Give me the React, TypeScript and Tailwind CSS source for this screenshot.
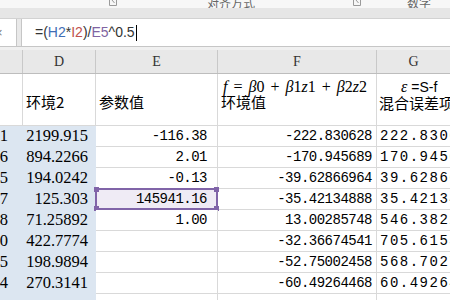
import React from 'react';

type Row = { c: string; d: string; e: string; f: string; g: string; active?: boolean };

const rows: Row[] = [
  { c: '1', d: '2199.915', e: '-116.38', f: '-222.830628', g: '222.830628' },
  { c: '6', d: '894.2266', e: '2.01', f: '-170.945689', g: '170.945689' },
  { c: '5', d: '194.0242', e: '-0.13', f: '-39.62866964', g: '39.62866964' },
  { c: '7', d: '125.303', e: '145941.16', f: '-35.42134888', g: '35.42134888', active: true },
  { c: '8', d: '71.25892', e: '1.00', f: '13.00285748', g: '546.3822394' },
  { c: '0', d: '422.7774', e: '', f: '-32.36674541', g: '705.6153221' },
  { c: '5', d: '198.9894', e: '', f: '-52.75002458', g: '568.7027365' },
  { c: '4', d: '270.3141', e: '', f: '-60.49264468', g: '60.49264468' },
  { c: '', d: '', e: '', f: '', g: '' },
];

const serif = "font-['Liberation_Serif','Times_New_Roman',serif]";
const mono = "font-['Liberation_Mono',monospace] text-[14px] tracking-[-0.5px]";
const cjk = "font-['Noto_Sans_CJK_SC','Noto_Sans',sans-serif] text-[15px]";

const Launcher = () => (
  <svg width="8" height="6" viewBox="0 0 8 6" className="text-[#9a9a9a]">
    <path d="M0.5 0 V5.5 H7.5 V0" fill="none" stroke="currentColor" strokeWidth="1" />
    <path d="M3 0 L5.5 3" stroke="currentColor" strokeWidth="1" />
  </svg>
);

export default function App() {
  return (
    <div className="w-[450px] h-[300px] overflow-hidden bg-[#f0f0f0] text-black">
      {/* ribbon bottom, labels cut off */}
      <div className="h-[8px] bg-[#f7f7f7] overflow-hidden flex items-end text-[12px] text-[#666] font-['Noto_Sans_CJK_SC',sans-serif] leading-none">
        <div className="w-[109px]" />
        <div className="mb-[2px]"><Launcher /></div>
        <div className="w-[90px]" />
        <div className="-mb-[1px]">对齐方式</div>
        <div className="w-[98px]" />
        <div className="mb-[2px]"><Launcher /></div>
        <div className="w-[46px]" />
        <div className="-mb-[1px]">数字</div>
      </div>
      <div className="h-[11px] bg-[#e6e6e6] border-b border-[#d2d2d2]" />

      {/* formula bar */}
      <div className="h-[27px] flex bg-[#e9e9e9]">
        <div className="w-[17px] bg-white border-r border-[#c6c6c6] flex items-center overflow-hidden">
          <span className="-ml-[5px] text-[13px] text-[#777] font-['Liberation_Sans',sans-serif]">×</span>
        </div>
        <div className="w-[4px]" />
        <div className="flex-1 bg-white border-l border-[#c6c6c6] flex items-center pl-[13px] font-['Liberation_Sans',Arial,sans-serif] text-[14px] text-[#333]">
          <span>=(</span>
          <span className="text-[#3f6db5]">H2</span>
          <span>*</span>
          <span className="text-[#c0504d]">I2</span>
          <span>)/</span>
          <span className="text-[#8064a2]">E5</span>
          <span>^0.5</span>
          <span className="w-px h-[16px] bg-black ml-[1px]" />
        </div>
      </div>
      <div className="h-[4px] bg-[#f0f0f0] border-t border-[#c6c6c6]" />

      {/* column headers */}
      <div className={`h-[24px] flex bg-[#e8e8e8] border-b border-[#bdbdbd] text-[14px] text-[#333] ${serif}`}>
        <div className="w-[23px] border-r border-[#c8c8c8]" />
        <div className="w-[73px] border-r border-[#c8c8c8] flex items-center justify-center">D</div>
        <div className="w-[122px] border-r border-[#c8c8c8] flex items-center justify-center">E</div>
        <div className="w-[159px] border-r border-[#c8c8c8] flex items-center justify-center">F</div>
        <div className="flex-1 flex items-center justify-center">G</div>
      </div>

      {/* title row */}
      <div className={`h-[52px] flex bg-white border-b border-[#d9d9d9] ${cjk}`}>
        <div className="w-[23px] border-r border-[#d9d9d9]" />
        <div className="w-[73px] border-r border-[#d9d9d9] pl-[3px] pt-[20px] leading-[15px]">环境2</div>
        <div className="w-[122px] border-r border-[#d9d9d9] pl-[3px] pt-[20px] leading-[15px]">参数值</div>
        <div className="w-[159px] border-r border-[#d9d9d9] pl-[5px] pt-[5px] leading-[15px]">
          <div className={`${serif} text-[16px] whitespace-nowrap [word-spacing:2px]`}>
            <i>f</i> = <i>β</i>0 + <i>β</i>1<i>z</i>1 + <i>β</i>2<i>z</i>2
          </div>
          <div className="-ml-[2px]">环境值</div>
        </div>
        <div className="flex-1 min-w-0 pl-[2px] pt-[5px] leading-[15px] whitespace-nowrap">
          <div className="pl-[22px] font-['Liberation_Sans',sans-serif] text-[14px]">
            <i className={`${serif} text-[16px] mr-[4px]`}>ε</i>=S-f
          </div>
          <div>混合误差项</div>
        </div>
      </div>

      {/* data rows */}
      {rows.map((r, i) => (
        <div key={i} className="h-[21px] flex">
          <div className={`w-[23px] bg-[#dce6f1] flex items-center justify-end pr-[15px] text-[16.5px] ${serif}`}>{r.c}</div>
          <div className={`w-[73px] bg-[#dce6f1] flex items-center justify-end pr-[8px] text-[16.5px] ${serif}`}>{r.d}</div>
          <div
            className={`w-[122px] relative border-r border-b border-[#d9d9d9] flex items-center justify-end pr-[10px] ${mono} ${
              r.active ? 'bg-[#efebf5]' : 'bg-white'
            }`}
          >
            {r.e}
            {r.active && (
              <div className="absolute -left-[1px] -top-[1px] -right-[1px] -bottom-[1px] border-2 border-[#8064a8] pointer-events-none">
                <div className="absolute -left-[3px] -top-[3px] w-[5px] h-[5px] bg-[#8064a8]" />
                <div className="absolute -right-[3px] -top-[3px] w-[5px] h-[5px] bg-[#8064a8]" />
                <div className="absolute -left-[3px] -bottom-[3px] w-[5px] h-[5px] bg-[#8064a8]" />
                <div className="absolute -right-[3px] -bottom-[3px] w-[5px] h-[5px] bg-[#8064a8]" />
              </div>
            )}
          </div>
          <div className={`w-[159px] bg-white border-r border-b border-[#d9d9d9] flex items-center justify-end pr-[4px] ${mono}`}>{r.f}</div>
          <div className="flex-1 min-w-0 bg-white border-b border-[#d9d9d9] flex items-center pl-[3px] whitespace-nowrap overflow-hidden font-['Liberation_Mono',monospace] text-[14px] tracking-[1.5px]">
            {r.g}
          </div>
        </div>
      ))}
    </div>
  );
}
